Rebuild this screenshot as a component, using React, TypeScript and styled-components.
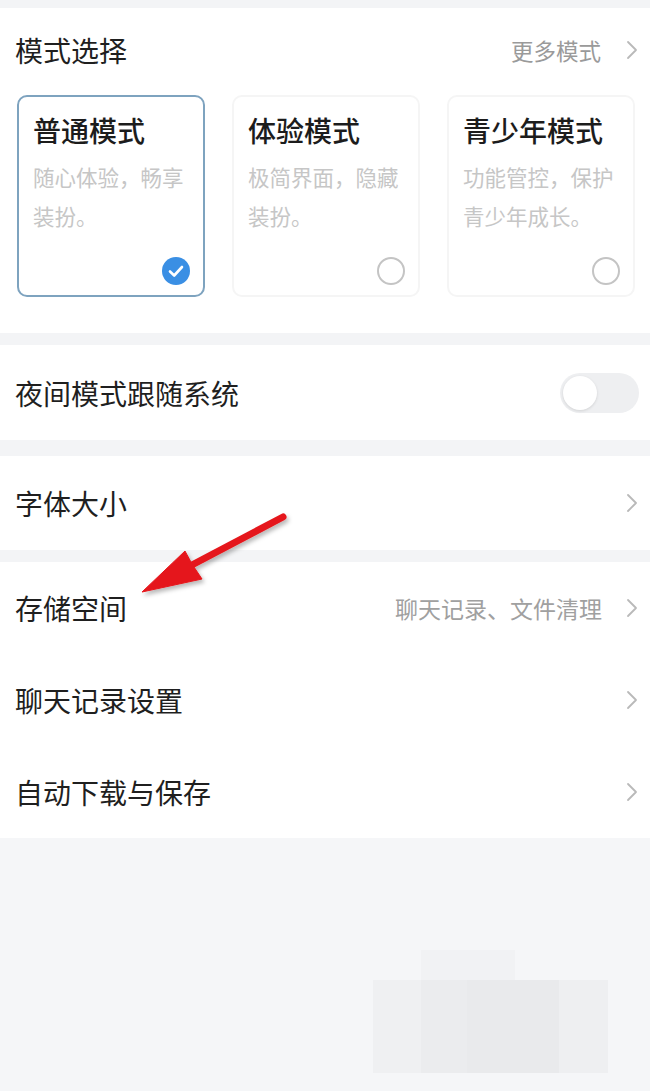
import React from "react";
import styled, { createGlobalStyle } from "styled-components";

const GlobalStyle = createGlobalStyle`
  html, body {
    margin: 0;
    padding: 0;
    background: #f5f6f8;
  }
  body {
    font-family: "Noto Sans CJK SC", "Noto Sans", sans-serif;
    color: #1f1f1f;
  }
`;

const Page = styled.div`
  position: relative;
  width: 650px;
  height: 1091px;
  overflow: hidden;
  background: #f5f6f8;
  display: flex;
  flex-direction: column;
`;

const Band = styled.div<{ $h: number }>`
  height: ${(p) => p.$h}px;
  flex-shrink: 0;
  background: #f3f4f6;
`;

const ModeSection = styled.section`
  background: #fff;
  padding: 20px 0 36px;
  display: flex;
  flex-direction: column;
  gap: 23px;
`;

const Header = styled.div`
  height: 44px;
  display: flex;
  align-items: center;
  justify-content: space-between;
  padding: 0 12px 0 15px;
`;

const Title = styled.span`
  font-size: 28px;
  line-height: 1;
  color: #1f1f1f;
`;

const More = styled.span`
  display: flex;
  align-items: center;
  gap: 25px;
  font-size: 22.5px;
  color: #9a9a9a;
`;

const Cards = styled.div`
  display: flex;
  gap: 27px;
  padding-left: 17px;
`;

const Card = styled.div<{ $active?: boolean }>`
  box-sizing: border-box;
  flex: 0 0 188px;
  height: 202px;
  border-radius: 10px;
  border: 2px solid ${(p) => (p.$active ? "#7ea3bf" : "#f5f5f5")};
  padding: 15px 12px 10px 14px;
  display: flex;
  flex-direction: column;
`;

const CardTitle = styled.div`
  font-size: 28px;
  line-height: 36px;
  color: #1c1c1c;
  font-weight: 500;
  white-space: nowrap;
`;

const CardDesc = styled.div`
  margin-top: 9px;
  font-size: 21.5px;
  line-height: 39px;
  color: #c6c6c6;
`;

const Mark = styled.div`
  margin-top: auto;
  align-self: flex-end;
  width: 28px;
  height: 28px;
  margin-right: 1px;
`;

const Radio = styled.div`
  box-sizing: border-box;
  width: 28px;
  height: 28px;
  border-radius: 50%;
  border: 2px solid #c4c4c4;
`;

const Row = styled.div<{ $h: number }>`
  height: ${(p) => p.$h}px;
  flex-shrink: 0;
  background: #fff;
  display: flex;
  align-items: center;
  justify-content: space-between;
  padding: 0 12px 0 15px;
`;

const RowLabel = styled.span`
  font-size: 28px;
  color: #1f1f1f;
`;

const RowRight = styled.span`
  display: flex;
  align-items: center;
  gap: 24px;
  font-size: 23px;
  color: #a0a0a0;
`;

const Toggle = styled.div`
  width: 79px;
  height: 40px;
  border-radius: 20px;
  background: #eeeff1;
  display: flex;
  align-items: center;
  padding-left: 3px;
  box-sizing: border-box;
  margin-right: -1px;
`;

const Knob = styled.div`
  width: 34px;
  height: 34px;
  border-radius: 50%;
  background: #fff;
  box-shadow: 0 1px 3px rgba(0, 0, 0, 0.12);
`;

const Bottom = styled.div`
  flex: 1;
  background: #f5f6f8;
  display: flex;
  flex-direction: column;
  align-items: flex-end;
  padding: 112px 42px 0 0;
`;

const Smudge = styled.div<{ $w: number; $h: number; $c: string; $mr?: number }>`
  width: ${(p) => p.$w}px;
  height: ${(p) => p.$h}px;
  background: ${(p) => p.$c};
  margin-right: ${(p) => p.$mr ?? 0}px;
`;

const SmudgeRow = styled.div`
  display: flex;
`;

const ArrowLayer = styled.svg`
  position: absolute;
  left: 130px;
  top: 505px;
  overflow: visible;
`;

const Chevron = () => (
  <svg width="12" height="20" viewBox="0 0 12 20">
    <path d="M2 2 L10 10 L2 18" fill="none" stroke="#b9b9b9" strokeWidth="1.8" strokeLinecap="round" strokeLinejoin="round" />
  </svg>
);

const Check = () => (
  <svg width="28" height="28" viewBox="0 0 28 28">
    <circle cx="14" cy="14" r="14" fill="#3a8fe4" />
    <path d="M8 14.5 L12.2 18.5 L20 10" fill="none" stroke="#fff" strokeWidth="2.6" strokeLinecap="round" strokeLinejoin="round" />
  </svg>
);

const modes = [
  { name: "普通模式", desc: "随心体验，畅享装扮。", active: true },
  { name: "体验模式", desc: "极简界面，隐藏装扮。" },
  { name: "青少年模式", desc: "功能管控，保护青少年成长。" },
];

export default function App() {
  return (
    <>
      <GlobalStyle />
      <Page>
        <Band $h={8} />
        <ModeSection>
          <Header>
            <Title>模式选择</Title>
            <More>
              更多模式 <Chevron />
            </More>
          </Header>
          <Cards>
            {modes.map((m) => (
              <Card key={m.name} $active={m.active}>
                <CardTitle>{m.name}</CardTitle>
                <CardDesc>{m.desc}</CardDesc>
                <Mark>{m.active ? <Check /> : <Radio />}</Mark>
              </Card>
            ))}
          </Cards>
        </ModeSection>
        <Band $h={12} />
        <Row $h={95}>
          <RowLabel>夜间模式跟随系统</RowLabel>
          <Toggle>
            <Knob />
          </Toggle>
        </Row>
        <Band $h={16} />
        <Row $h={94}>
          <RowLabel>字体大小</RowLabel>
          <Chevron />
        </Row>
        <Band $h={12} />
        <Row $h={92}>
          <RowLabel>存储空间</RowLabel>
          <RowRight>
            聊天记录、文件清理 <Chevron />
          </RowRight>
        </Row>
        <Row $h={92}>
          <RowLabel>聊天记录设置</RowLabel>
          <Chevron />
        </Row>
        <Row $h={92}>
          <RowLabel>自动下载与保存</RowLabel>
          <Chevron />
        </Row>
        <Bottom>
          <SmudgeRow>
            <Smudge $w={94} $h={30} $c="#f1f2f4" $mr={93} />
          </SmudgeRow>
          <SmudgeRow>
            <Smudge $w={48} $h={93} $c="#eff0f2" />
            <Smudge $w={46} $h={93} $c="#ebecee" />
            <Smudge $w={92} $h={93} $c="#e9eaec" />
            <Smudge $w={49} $h={93} $c="#eeeff1" />
          </SmudgeRow>
        </Bottom>
        <ArrowLayer width="170" height="100" viewBox="0 0 170 100">
          <defs>
            <filter id="shadow" x="-20%" y="-20%" width="140%" height="140%">
              <feDropShadow dx="2" dy="3" stdDeviation="2" floodColor="#000" floodOpacity="0.28" />
            </filter>
          </defs>
          <g filter="url(#shadow)" fill="#e5161b" stroke="#e5161b">
            <line x1="153" y1="12" x2="60" y2="61" strokeWidth="7" strokeLinecap="round" />
            <path d="M12 87 L55 46 L62 59 L72 74 Z" strokeWidth="1" strokeLinejoin="round" />
          </g>
        </ArrowLayer>
      </Page>
    </>
  );
}
